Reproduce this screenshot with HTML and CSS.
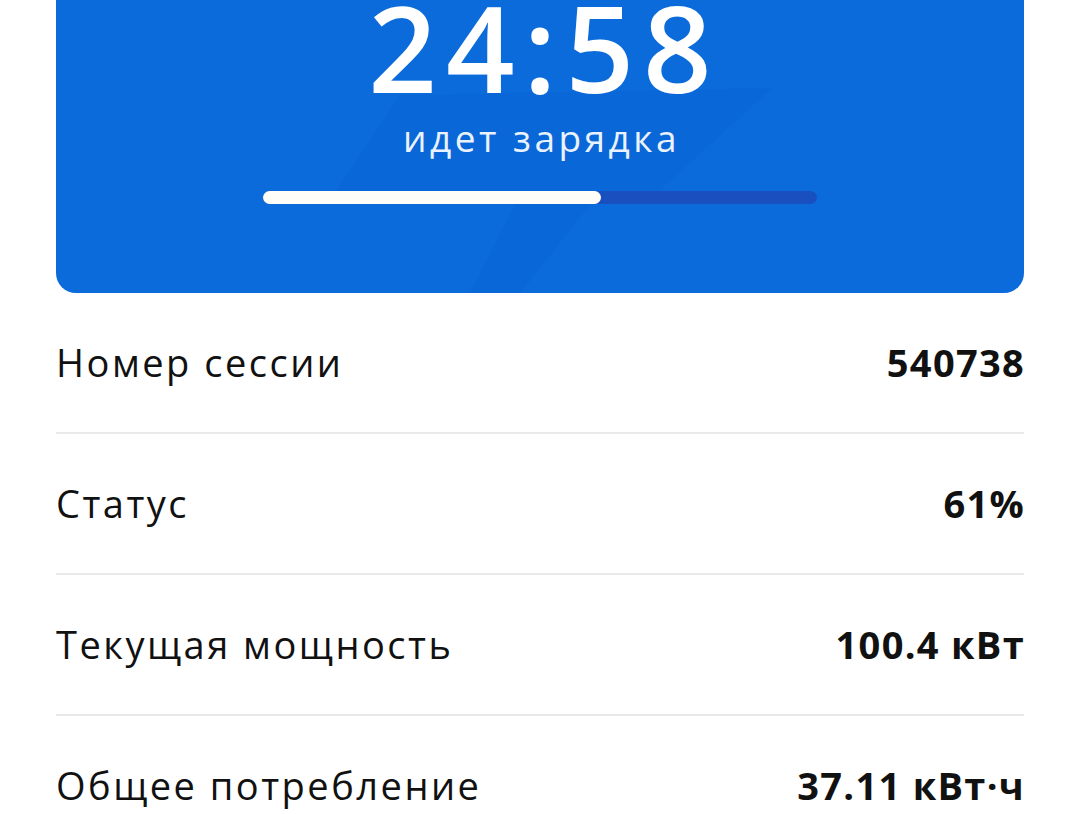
FILE: index.html
```html
<html>
<head>
  <title>Зарядка</title>
  <meta name="viewport" content="width=device-width, initial-scale=1.0">
  <link rel="stylesheet" href="styles.css">
</head>
<body>
  <div id="screen">
    <div class="charge-card">
      <svg class="bolt" viewBox="0 0 968 293" preserveAspectRatio="none">
        <polygon points="344,95 716,88 604,190 544,192 464,293 414,293 464,195 274,200"/>
      </svg>
      <div class="timer">24:58</div>
      <div class="state">идет зарядка</div>
      <div class="progress">
        <div class="progress-fill" style="width: 61%"></div>
      </div>
    </div>

    <div class="info-row">
      <span class="label">Номер сессии</span>
      <span class="value">540738</span>
    </div>
    <div class="info-row">
      <span class="label">Статус</span>
      <span class="value">61%</span>
    </div>
    <div class="info-row">
      <span class="label">Текущая мощность</span>
      <span class="value">100.4 кВт</span>
    </div>
    <div class="info-row">
      <span class="label">Общее потребление</span>
      <span class="value">37.11 кВт·ч</span>
    </div>
  </div>
</body>
</html>
```

FILE: styles.css
```css
body {
  margin: 0;
  background: #ffffff;
  font-family: "Open Sans", "Noto Sans", sans-serif;
  color: #111111;
  overflow: hidden;
}
#screen {
  padding: 0 56px;
}
.charge-card {
  position: relative;
  height: 293px;
  background: #0b6bda;
  border-radius: 0 0 20px 20px;
  display: flex;
  flex-direction: column;
  align-items: center;
  overflow: hidden;
  color: #ffffff;
}
.bolt {
  position: absolute;
  top: 0;
  left: 0;
  width: 100%;
  height: 100%;
}
.bolt polygon {
  fill: #0a5fcf;
  opacity: 0.3;
}
.timer {
  position: relative;
  font-size: 120px;
  font-weight: 600;
  line-height: 94px;
  letter-spacing: 9px;
  margin-right: -9px;
}
.state {
  position: relative;
  font-size: 37px;
  line-height: 44px;
  margin-top: 22px;
  margin-right: -3px;
  color: #eaf2ff;
  letter-spacing: 3.5px;
}
.progress {
  position: relative;
  width: 554px;
  height: 13px;
  margin-top: 31px;
  border-radius: 7px;
  background: #1a4fc0;
}
.progress-fill {
  height: 100%;
  border-radius: 7px;
  background: #fffdf8;
}
.info-row {
  display: flex;
  justify-content: space-between;
  align-items: center;
  padding: 45px 0 46px;
  line-height: 48px;
  border-bottom: 2px solid #e9e9eb;
  font-size: 38px;
}
.label {
  font-weight: 400;
  letter-spacing: 2.5px;
}
.value {
  font-weight: 700;
  letter-spacing: 1.3px;
  margin-right: -1px;
}
```
